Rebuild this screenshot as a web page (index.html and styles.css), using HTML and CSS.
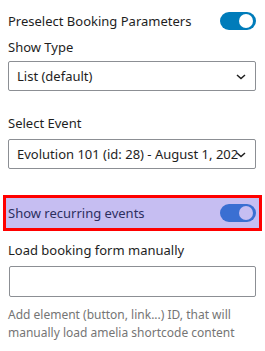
FILE: index.html
```html
<!DOCTYPE html>
<html lang="en">
<head>
    <meta charset="UTF-8">
    <meta name="viewport" content="width=device-width, initial-scale=1.0">
    <title>Booking Settings</title>
    <link rel="stylesheet" href="styles.css">
</head>
<body>

<div class="panel">
    <div class="toggle-row first">
        <span class="toggle-label">Preselect Booking Parameters</span>
        <span class="toggle on"><span class="knob"></span></span>
    </div>

    <label class="field-label" for="show_type">Show Type</label>
    <div class="select-wrap">
        <select id="show_type">
            <option>List (default)</option>
        </select>
        <svg class="chevron" width="10" height="6" viewBox="0 0 10 6"><path d="M1 1l4 3.5L9 1" fill="none" stroke="#1e1e1e" stroke-width="1.5"/></svg>
    </div>

    <label class="field-label event-label" for="select_event">Select Event</label>
    <div class="select-wrap">
        <select id="select_event">
            <option>Evolution 101 (id: 28) - August 1, 2023</option>
        </select>
        <svg class="chevron" width="10" height="6" viewBox="0 0 10 6"><path d="M1 1l4 3.5L9 1" fill="none" stroke="#1e1e1e" stroke-width="1.5"/></svg>
    </div>

    <div class="toggle-row highlight">
        <span class="toggle-label">Show recurring events</span>
        <span class="toggle on"><span class="knob"></span></span>
    </div>

    <label class="field-label load-label" for="load_manual">Load booking form manually</label>
    <input type="text" id="load_manual" class="text-input">
    <p class="help">Add element (button, link...) ID, that will manually load amelia shortcode content</p>
</div>

</body>
</html>
```

FILE: styles.css
```css
body {
    margin: 0;
    padding: 0;
    background: #fff;
    color: #1e1e1e;
    font-family: 'Noto Sans', sans-serif;
    font-size: 13px;
}
.panel {
    width: 265px;
    padding: 12px 9px 0 8px;
    box-sizing: border-box;
    display: flex;
    flex-direction: column;
}
.toggle-row {
    display: flex;
    align-items: center;
    justify-content: space-between;
    height: 18px;
}
.toggle-label {
    line-height: 18px;
}
.toggle {
    width: 36px;
    height: 18px;
    border-radius: 9px;
    background: #007cba;
    position: relative;
    flex-shrink: 0;
}
.knob {
    position: absolute;
    top: 2px;
    right: 3px;
    width: 14px;
    height: 14px;
    border-radius: 50%;
    background: #fff;
}
.field-label {
    display: block;
    line-height: 16px;
    margin-top: 9px;
    margin-bottom: 6px;
}
.event-label {
    margin-top: 24px;
    margin-bottom: 8px;
}
.load-label {
    margin-top: 11px;
    margin-bottom: 8px;
}
.select-wrap {
    position: relative;
}
select {
    appearance: none;
    -webkit-appearance: none;
    width: 100%;
    height: 30px;
    margin: 0;
    padding: 0 17px 0 8px;
    border: 1px solid #8c8f94;
    border-radius: 2px;
    background: #fff;
    color: #1e1e1e;
    font-family: inherit;
    font-size: 13px;
}
.chevron {
    position: absolute;
    right: 10px;
    top: 13px;
    pointer-events: none;
}
.highlight {
    height: 30px;
    margin: 26px -6px 0 -5px;
    padding: 0 3px 0 2px;
    border: 3px solid #f00;
    background: #c6bef2;
    color: #2d2f5f;
}
.highlight .toggle {
    background: #3a6fd2;
}
.highlight .knob {
    background: #c6bef2;
}
.text-input {
    height: 31px;
    margin: 0 0 0 1px;
    padding: 0 8px;
    border: 1px solid #8c8f94;
    border-radius: 2px;
    box-sizing: border-box;
    font-family: inherit;
    font-size: 13px;
}
.help {
    margin: 9px 0 0;
    font-size: 12px;
    line-height: 18px;
    color: #757575;
}
```
